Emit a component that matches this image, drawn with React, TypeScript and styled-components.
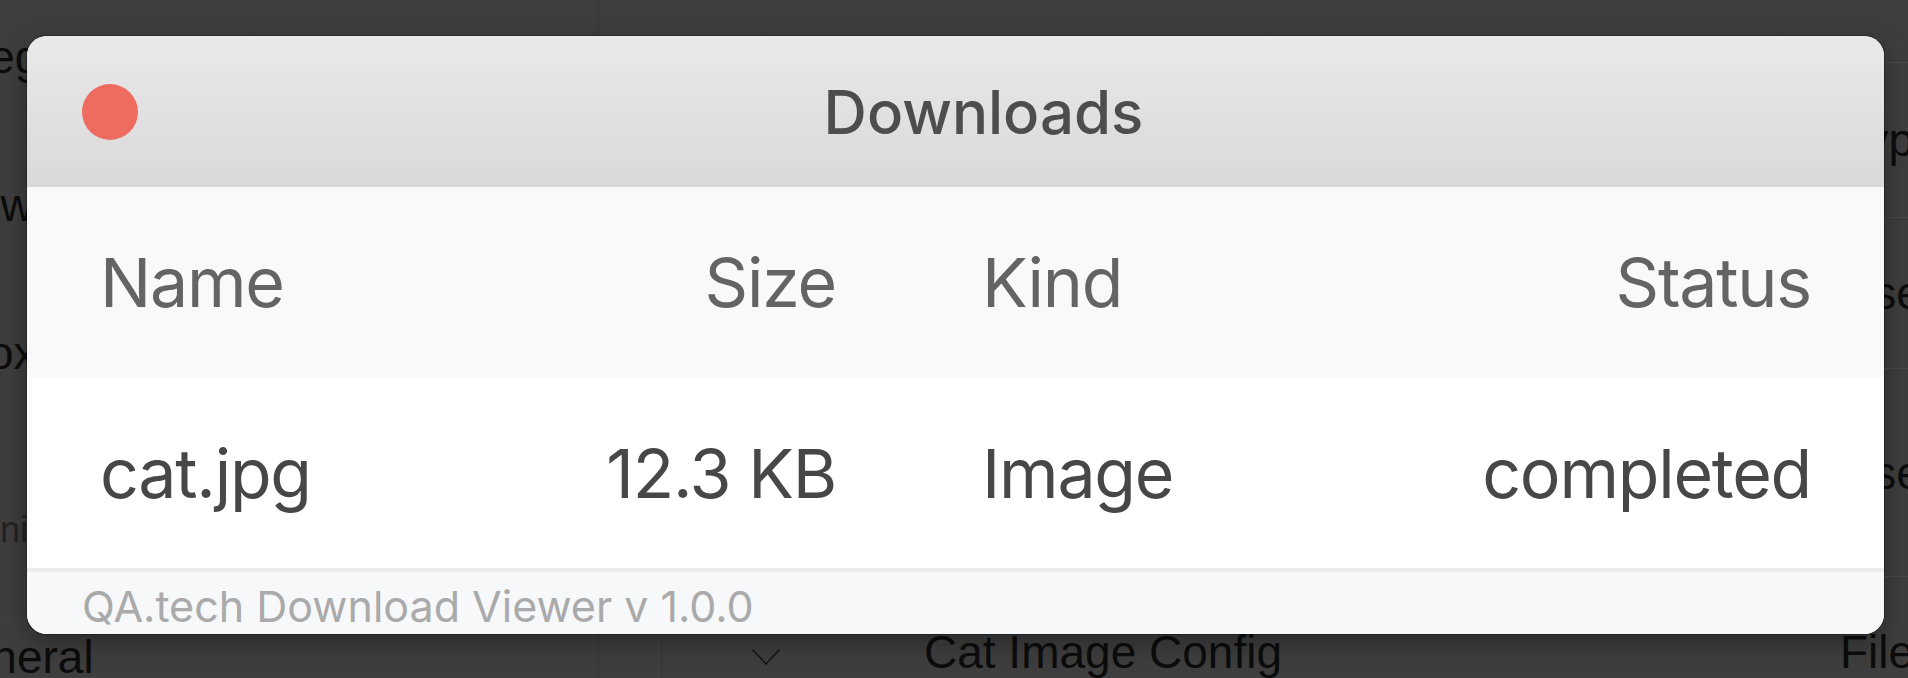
import styled, { createGlobalStyle } from "styled-components";

const GlobalStyle = createGlobalStyle`
  html, body {
    margin: 0;
    padding: 0;
  }
  body {
    background: #3e3e3e;
    font-family: Inter, "Liberation Sans", sans-serif;
    overflow: hidden;
  }
`;

type Download = {
  name: string;
  size: string;
  kind: string;
  status: string;
};

const downloads: Download[] = [
  { name: "cat.jpg", size: "12.3 KB", kind: "Image", status: "completed" },
];

// page behind the dimmed overlay (mostly covered by the window)
const navItems = [
  { label: "Integrations", shift: 62 },
  { label: "Overview", shift: 158 },
  { label: "Sandbox", shift: 145 },
];

const bgRows = [
  { name: "", type: "Use", height: 151 },
  { name: "", type: "Use", height: 208 },
  { name: "Cat Image Config", type: "File", height: 151, expandable: true },
];

const App = () => {
  return (
    <>
      <GlobalStyle />
      <Page>
        <Sidebar>
          {navItems.map((item) => (
            <NavItem key={item.label} $shift={item.shift}>
              {item.label}
            </NavItem>
          ))}
          <NavHeading $shift={80}>Organization</NavHeading>
          <NavItem $shift={70}>General</NavItem>
        </Sidebar>

        <Main>
          <Toolbar />
          <BgRow $height={155}>
            <BgCell />
            <BgCell />
            <BgText $indent={54} />
            <BgText>Type</BgText>
          </BgRow>
          {bgRows.map((row, i) => (
            <BgRow key={i} $height={row.height}>
              <BgCell $bordered />
              <BgCell $center>{row.expandable && <Chevron />}</BgCell>
              <BgText $indent={54}>{row.name}</BgText>
              <BgText>{row.type}</BgText>
            </BgRow>
          ))}
        </Main>

        <Window>
          <TitleBar>
            <CloseDot />
            <Title>Downloads</Title>
          </TitleBar>

          <HeaderRow>
            <Cell>Name</Cell>
            <Cell $align="right">Size</Cell>
            <Cell>Kind</Cell>
            <Cell $align="right">Status</Cell>
          </HeaderRow>

          {downloads.map((d) => (
            <DataRow key={d.name}>
              <Cell>{d.name}</Cell>
              <Cell $align="right">{d.size}</Cell>
              <Cell>{d.kind}</Cell>
              <Cell $align="right">{d.status}</Cell>
            </DataRow>
          ))}

          <Footer>QA.tech Download Viewer v 1.0.0</Footer>
        </Window>
      </Page>
    </>
  );
};

const Chevron = () => (
  <svg width="30" height="18" viewBox="0 0 30 18" fill="none">
    <path d="M1.5 1.5 L15 16 L28.5 1.5" stroke="#151515" strokeWidth="1.6" />
  </svg>
);

const Page = styled.div`
  position: relative;
  width: 1908px;
  height: 678px;
  overflow: hidden;
  display: grid;
  grid-template-columns: 599px 1fr;
  background: #3e3e3e;
  font-family: "Liberation Sans", Arial, sans-serif;
  color: #0c0c0c;
`;

const Sidebar = styled.nav`
  display: flex;
  flex-direction: column;
  border-right: 1px solid #363636;
  overflow: hidden;
`;

const NavItem = styled.div<{ $shift: number }>`
  flex: none;
  height: 114px;
  padding-bottom: 34px;
  display: flex;
  align-items: center;
  margin-left: -${(p) => p.$shift}px;
  font-size: 46px;
  white-space: nowrap;
`;

const NavHeading = styled.div<{ $shift: number }>`
  flex: none;
  height: 40px;
  padding: 66px 0 50px;
  margin-left: -${(p) => p.$shift}px;
  font-size: 36px;
  line-height: 40px;
  color: #222;
  white-space: nowrap;
`;

const Main = styled.div`
  display: flex;
  flex-direction: column;
  overflow: hidden;
`;

const Toolbar = styled.div`
  flex: none;
  height: 62px;
`;

const BgRow = styled.div<{ $height: number }>`
  flex: none;
  display: grid;
  grid-template-columns: 63px 208px 970px 1fr;
  height: ${(p) => p.$height}px;
  border-top: 1px solid #4a4a4a;
  box-sizing: border-box;
  font-size: 46px;
`;

const BgCell = styled.div<{ $bordered?: boolean; $center?: boolean }>`
  display: flex;
  align-items: center;
  justify-content: ${(p) => (p.$center ? "center" : "flex-start")};
  border-right: ${(p) => (p.$bordered ? "1px solid #363636" : "none")};
  padding-top: 10px;
`;

const BgText = styled.div<{ $indent?: number }>`
  display: flex;
  align-items: center;
  padding-left: ${(p) => p.$indent ?? 0}px;
  white-space: nowrap;
  overflow: hidden;
`;

const Window = styled.div`
  position: absolute;
  left: 27px;
  top: 36px;
  width: 1857px;
  height: 598px;
  display: flex;
  flex-direction: column;
  border-radius: 20px;
  overflow: hidden;
  background: #fff;
  box-shadow: 0 0 0 1px rgba(0, 0, 0, 0.25), 0 8px 28px rgba(0, 0, 0, 0.35);
  font-family: Inter, "Liberation Sans", sans-serif;
`;

const TitleBar = styled.div`
  flex: none;
  height: 151px;
  display: flex;
  align-items: center;
  padding: 0 55px;
  background: linear-gradient(to bottom, #e9e9e9, #d9d9d9);
`;

const CloseDot = styled.span`
  flex: none;
  width: 56px;
  height: 56px;
  border-radius: 50%;
  background: #ee6b5f;
`;

const Title = styled.div`
  flex: 1;
  text-align: center;
  font-size: 60px;
  font-weight: 500;
  color: #4d4d4d;
`;

const Row = styled.div`
  flex: none;
  display: grid;
  grid-template-columns: 441px 441px 487px 488px;
  font-size: 68px;
  letter-spacing: -0.018em;
`;

const HeaderRow = styled(Row)`
  height: 190px;
  background: #f8f9fb;
  color: #646464;
`;

const DataRow = styled(Row)`
  height: 191px;
  background: #fff;
  color: #474747;
`;

const Cell = styled.div<{ $align?: "left" | "right" }>`
  display: flex;
  align-items: center;
  justify-content: ${(p) => (p.$align === "right" ? "flex-end" : "flex-start")};
  padding: 0 73px;
  white-space: nowrap;
`;

const Footer = styled.div`
  flex: 1;
  border-top: 4px solid #ececec;
  background: #f7f8fa;
  padding: 8px 55px 0;
  font-size: 43px;
  color: #aaaaaa;
  white-space: nowrap;
`;

export default App;
